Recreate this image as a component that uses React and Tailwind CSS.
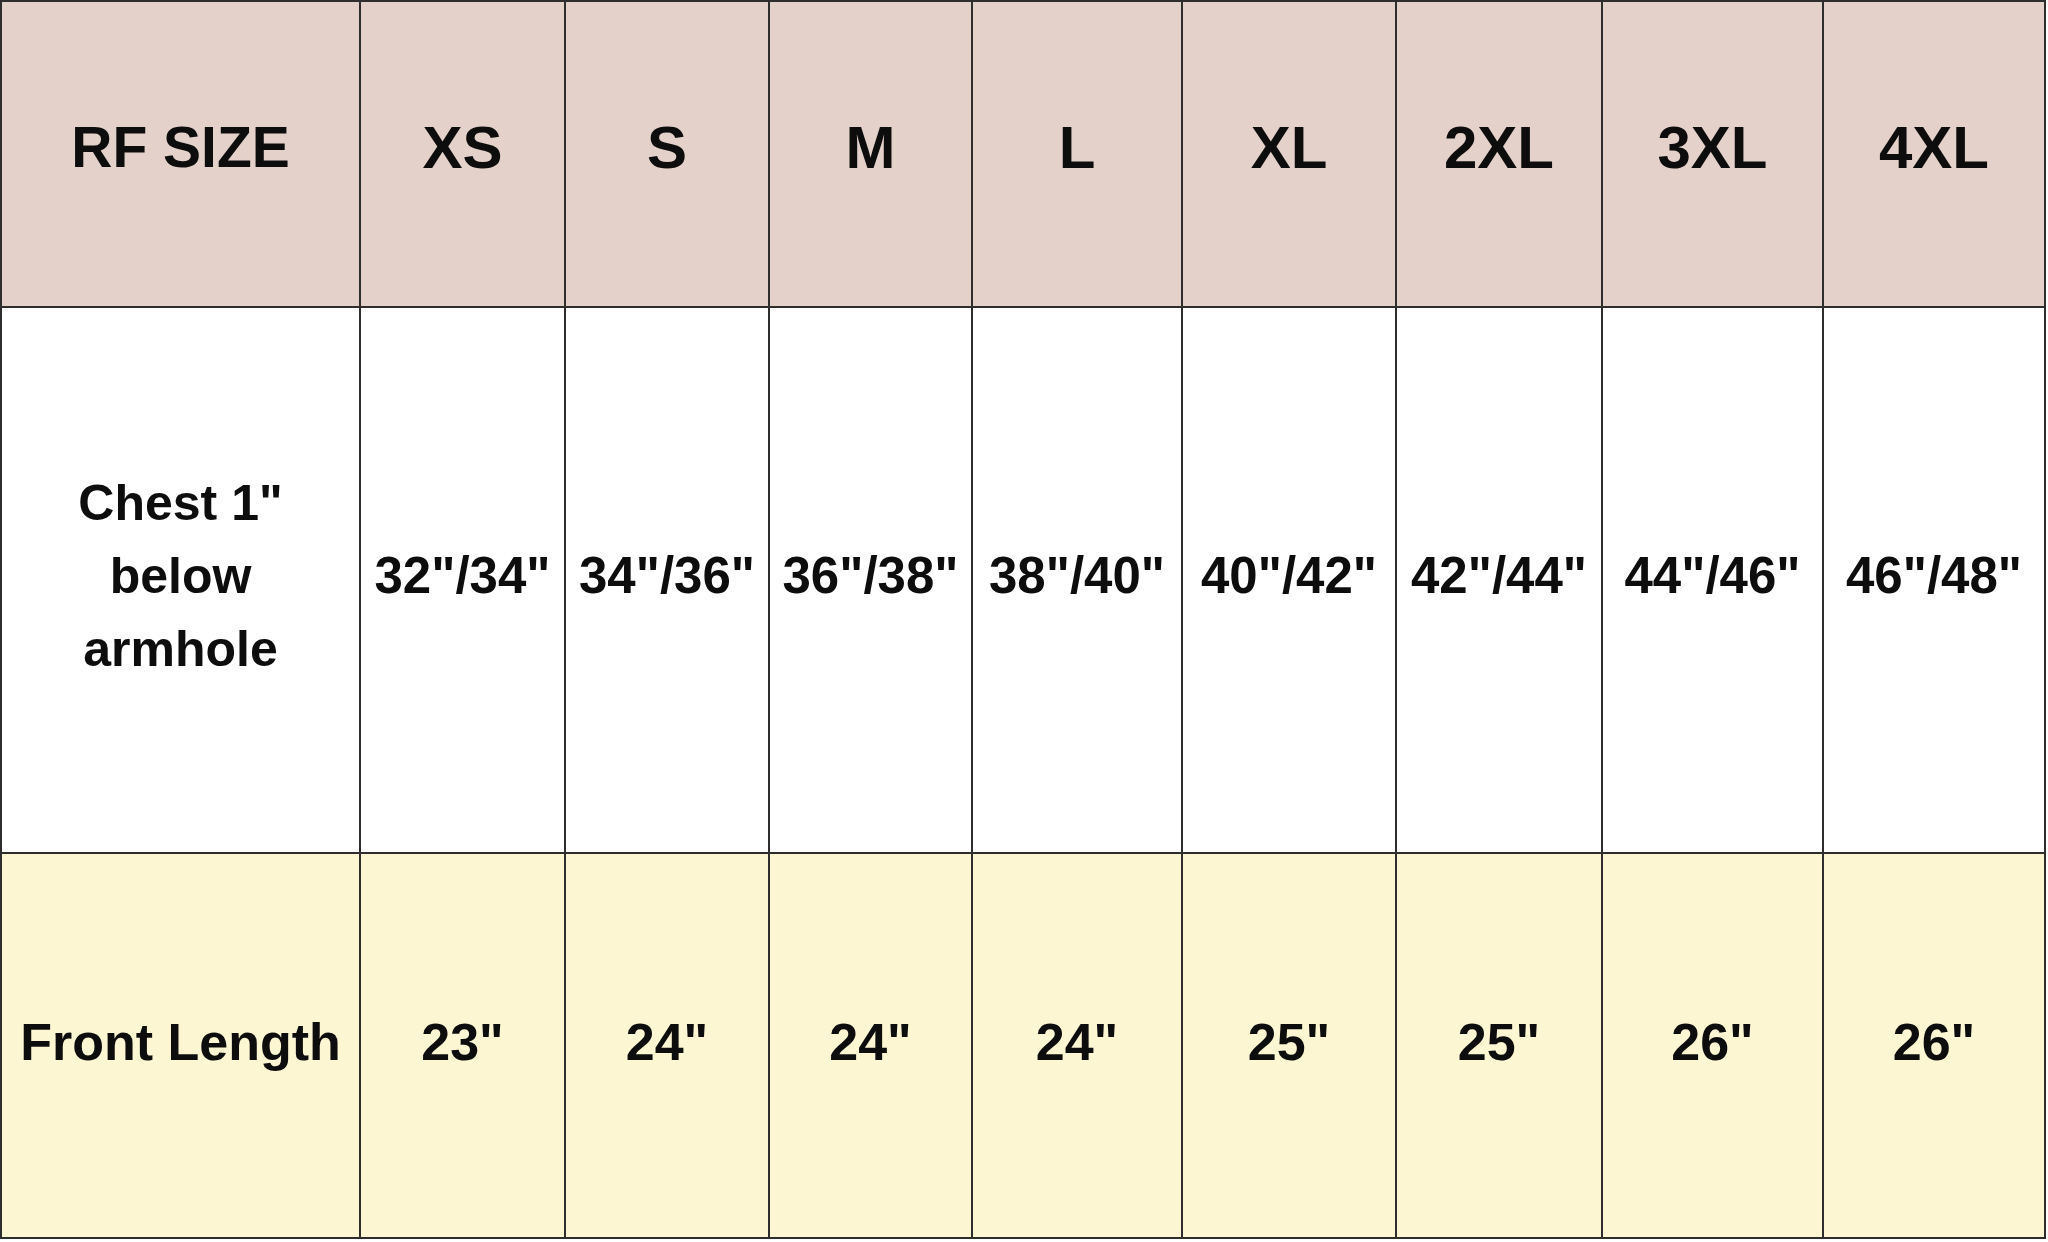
import React from 'react';

const sizes = ['XS', 'S', 'M', 'L', 'XL', '2XL', '3XL', '4XL'];
const chest = ['32"/34"', '34"/36"', '36"/38"', '38"/40"', '40"/42"', '42"/44"', '44"/46"', '46"/48"'];
const front = ['23"', '24"', '24"', '24"', '25"', '25"', '26"', '26"'];

export default function App() {
    const cell = 'flex items-center justify-center text-center border-r-2 border-b-2 border-[#2e2e2e]';

    return (
        <div className="w-[2048px] h-[1242px] bg-white text-[#0d0d0d]" style={{ fontFamily: '"Liberation Sans", Arial, sans-serif' }}>
            <div className="w-[2046px] border-l-2 border-t-2 border-[#2e2e2e] grid grid-cols-[359px_205px_204px_203px_210px_214px_206px_221px_222px] grid-rows-[306px_546px_385px] font-bold">
                {/* header row */}
                <div className={`${cell} bg-[#e4d1ca] text-[57px] pb-[12px]`}>RF SIZE</div>
                {sizes.map((s) => (
                    <div key={s} className={`${cell} bg-[#e4d1ca] text-[60px] pb-[12px]`}>{s}</div>
                ))}

                {/* chest row */}
                <div className={`${cell} bg-white text-[50px] leading-[73px] pb-[8px]`}>
                    <span>Chest 1"<br />below<br />armhole</span>
                </div>
                {chest.map((c, i) => (
                    <div key={i} className={`${cell} bg-white text-[51px] whitespace-nowrap pb-[8px]`}>{c}</div>
                ))}

                {/* front length row */}
                <div className={`${cell} bg-[#fdf6d3] text-[52px] whitespace-nowrap pb-[8px]`}>Front Length</div>
                {front.map((f, i) => (
                    <div key={i} className={`${cell} bg-[#fdf6d3] text-[52px] pb-[8px]`}>{f}</div>
                ))}
            </div>
        </div>
    );
}
